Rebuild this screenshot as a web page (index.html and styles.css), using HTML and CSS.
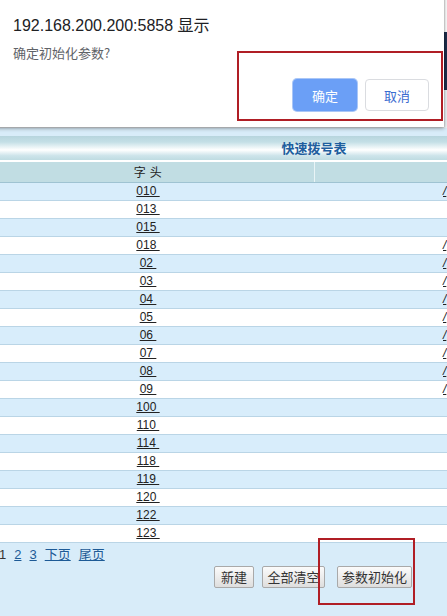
FILE: index.html
```html
<!DOCTYPE html>
<html lang="zh-CN">
<head>
<meta charset="utf-8">
<title>快速拨号表</title>
<link rel="stylesheet" href="styles.css">
</head>
<body>
<div class="page">
  <div class="masthead">
    <div class="mast-top"></div>
    <div class="mast-nav"></div>
    <div class="mast-bottom"></div>
  </div>
  <div class="content">
    <table class="grid">
      <colgroup><col class="col-a"><col class="col-b"></colgroup>
      <thead>
        <tr class="title-row"><th colspan="2">快速拨号表</th></tr>
        <tr class="head-row"><th>字头</th><th class="sep"></th></tr>
      </thead>
      <tbody>
        <tr><td><a href="#">010&nbsp;</a></td><td class="city"><a href="#">/</a></td></tr>
        <tr><td><a href="#">013&nbsp;</a></td><td class="city"></td></tr>
        <tr><td><a href="#">015&nbsp;</a></td><td class="city"></td></tr>
        <tr><td><a href="#">018&nbsp;</a></td><td class="city"><a href="#">/</a></td></tr>
        <tr><td><a href="#">02&nbsp;</a></td><td class="city"><a href="#">/</a></td></tr>
        <tr><td><a href="#">03&nbsp;</a></td><td class="city"><a href="#">/</a></td></tr>
        <tr><td><a href="#">04&nbsp;</a></td><td class="city"><a href="#">/</a></td></tr>
        <tr><td><a href="#">05&nbsp;</a></td><td class="city"><a href="#">/</a></td></tr>
        <tr><td><a href="#">06&nbsp;</a></td><td class="city"><a href="#">/</a></td></tr>
        <tr><td><a href="#">07&nbsp;</a></td><td class="city"><a href="#">/</a></td></tr>
        <tr><td><a href="#">08&nbsp;</a></td><td class="city"><a href="#">/</a></td></tr>
        <tr><td><a href="#">09&nbsp;</a></td><td class="city"><a href="#">/</a></td></tr>
        <tr><td><a href="#">100&nbsp;</a></td><td class="city"></td></tr>
        <tr><td><a href="#">110&nbsp;</a></td><td class="city"></td></tr>
        <tr><td><a href="#">114&nbsp;</a></td><td class="city"></td></tr>
        <tr><td><a href="#">118&nbsp;</a></td><td class="city"></td></tr>
        <tr><td><a href="#">119&nbsp;</a></td><td class="city"></td></tr>
        <tr><td><a href="#">120&nbsp;</a></td><td class="city"></td></tr>
        <tr><td><a href="#">122&nbsp;</a></td><td class="city"></td></tr>
        <tr><td><a href="#">123&nbsp;</a></td><td class="city"></td></tr>
      </tbody>
    </table>
    <div class="footer">
      <div class="pager">
        <span class="current">1</span>
        <a href="#">2</a>
        <a href="#">3</a>
        <a href="#">下页</a>
        <a href="#">尾页</a>
      </div>
      <div class="actions">
        <button class="btn btn-new">新建</button>
        <button class="btn btn-clear">全部清空</button>
        <button class="btn btn-init">参数初始化</button>
      </div>
    </div>
  </div>
</div>

<div class="dialog">
  <div class="dialog-title">192.168.200.200:5858 显示</div>
  <div class="dialog-msg">确定初始化参数?</div>
  <div class="dialog-buttons">
    <button class="dbtn dbtn-ok">确定</button>
    <button class="dbtn dbtn-cancel">取消</button>
  </div>
  <div class="mark mark-dialog"></div>
</div>

<div class="mark mark-init"></div>
</body>
</html>
```

FILE: styles.css
```css
html, body {
  margin: 0;
  padding: 0;
}

body {
  position: relative;
  width: 447px;
  height: 616px;
  overflow: hidden;
  background: #d8ecf9;
  font-family: "Liberation Sans", Arial, "Noto Sans CJK SC", sans-serif;
  font-size: 12px;
  color: #222;
}

/* page is scrolled slightly to the right */
.page {
  margin-left: -18px;
  width: 664px;
}

.masthead {
  height: 128px;
  display: flex;
  flex-direction: column;
}
.mast-top { height: 32px; background: #ffffff; }
.mast-nav { height: 58px; background: #1c2e4c; }
.mast-bottom { flex: 1; background: #eef3f6; }

.content {
  padding-top: 8px;
}

/* dial table */
.grid {
  width: 664px;
  border-collapse: collapse;
  table-layout: fixed;
}
.col-a, .col-b { width: 332px; }

.title-row th {
  height: 24px;
  padding: 0;
  border-bottom: 2px solid #ffffff;
  background: linear-gradient(#b7d5de 0%, #c4dfe6 25%, #ffffff 58%, #cde4ea 82%, #bfdce2 100%);
  color: #1f5e9e;
  font-family: "Noto Sans CJK SC", sans-serif;
  font-size: 13px;
  font-weight: bold;
  line-height: 24px;
  text-align: center;
}

.head-row th {
  height: 20px;
  padding: 0;
  background: #c1dde3;
  border-bottom: 1px solid #9fc3d2;
  font-family: "Noto Sans CJK SC", sans-serif;
  font-size: 12px;
  font-weight: normal;
  letter-spacing: 4px;
  text-indent: 4px;
  line-height: 20px;
  color: #222;
  text-align: center;
}
.head-row th.sep {
  border-left: 1px solid #e9f4f6;
}

.grid tbody td {
  height: 17px;
  padding: 0;
  line-height: 17px;
  border-bottom: 1px solid #bad5e6;
  text-align: center;
  white-space: nowrap;
  overflow: hidden;
}
.grid tbody tr:nth-child(odd) td { background: #d8edfb; }
.grid tbody tr:nth-child(even) td { background: #ffffff; }

.grid tbody td a {
  color: #222;
  text-decoration: underline;
}
.grid tbody td.city {
  text-align: left;
  padding-left: 129px;
  font-style: italic;
}

/* footer: pager and action buttons */
.footer {
  height: 80px;
  padding-top: 5px;
  box-sizing: border-box;
}

.pager {
  display: flex;
  gap: 8px;
  padding-left: 17px;
  font-family: "Liberation Sans", Arial, "Noto Sans CJK SC", sans-serif;
  font-size: 13px;
  line-height: 14px;
}
.pager .current { color: #333; }
.pager a {
  color: #1d5a96;
  text-decoration: underline;
}

.actions {
  display: flex;
  padding-left: 232px;
  margin-top: 4px;
}

.btn {
  height: 22px;
  padding: 0;
  margin: 0;
  border: 1px solid #a9a9a9;
  border-radius: 2px;
  background: linear-gradient(#fbfbfb, #dedede);
  color: #333;
  font-family: "Noto Sans CJK SC", sans-serif;
  font-size: 13px;
  line-height: 20px;
}
.btn-new { width: 40px; margin-right: 8px; }
.btn-clear { width: 63px; margin-right: 12px; }
.btn-init { width: 75px; }

/* alert dialog overlay */
.dialog {
  position: absolute;
  left: -20px;
  top: -10px;
  width: 464px;
  height: 137px;
  box-sizing: border-box;
  padding: 26px 15px 0 33px;
  background: #ffffff;
  box-shadow: 0 1px 4px rgba(0, 0, 0, 0.45), 0 0 1px rgba(0, 0, 0, 0.3);
}

.dialog-title {
  font-family: "Liberation Sans", Arial, "Noto Sans CJK SC", sans-serif;
  font-size: 16px;
  line-height: 20px;
  color: #202124;
}

.dialog-msg {
  margin-top: 9px;
  font-family: "Noto Sans CJK SC", sans-serif;
  font-size: 13px;
  line-height: 16px;
  color: #5f6368;
}

.dialog-buttons {
  display: flex;
  justify-content: flex-end;
  gap: 8px;
  margin-top: 18px;
}

.dbtn {
  width: 64px;
  height: 32px;
  padding: 0;
  border-radius: 4px;
  font-family: "Noto Sans CJK SC", sans-serif;
  font-size: 13px;
}
.dbtn-ok {
  background: #6b9ff6;
  border: 1px solid #6b9ff6;
  color: #ffffff;
  box-shadow: 0 0 0 1px #a9c6f7;
}
.dbtn-cancel {
  background: #ffffff;
  border: 1px solid #dadce0;
  color: #3a6bd0;
}

/* red highlight frames */
.mark {
  position: absolute;
  border: 2px solid #b01e25;
  box-sizing: border-box;
  pointer-events: none;
}
.mark-dialog {
  left: 257px;
  top: 61px;
  width: 206px;
  height: 70px;
}
.mark-init {
  left: 318px;
  top: 538px;
  width: 97px;
  height: 67px;
}
```
